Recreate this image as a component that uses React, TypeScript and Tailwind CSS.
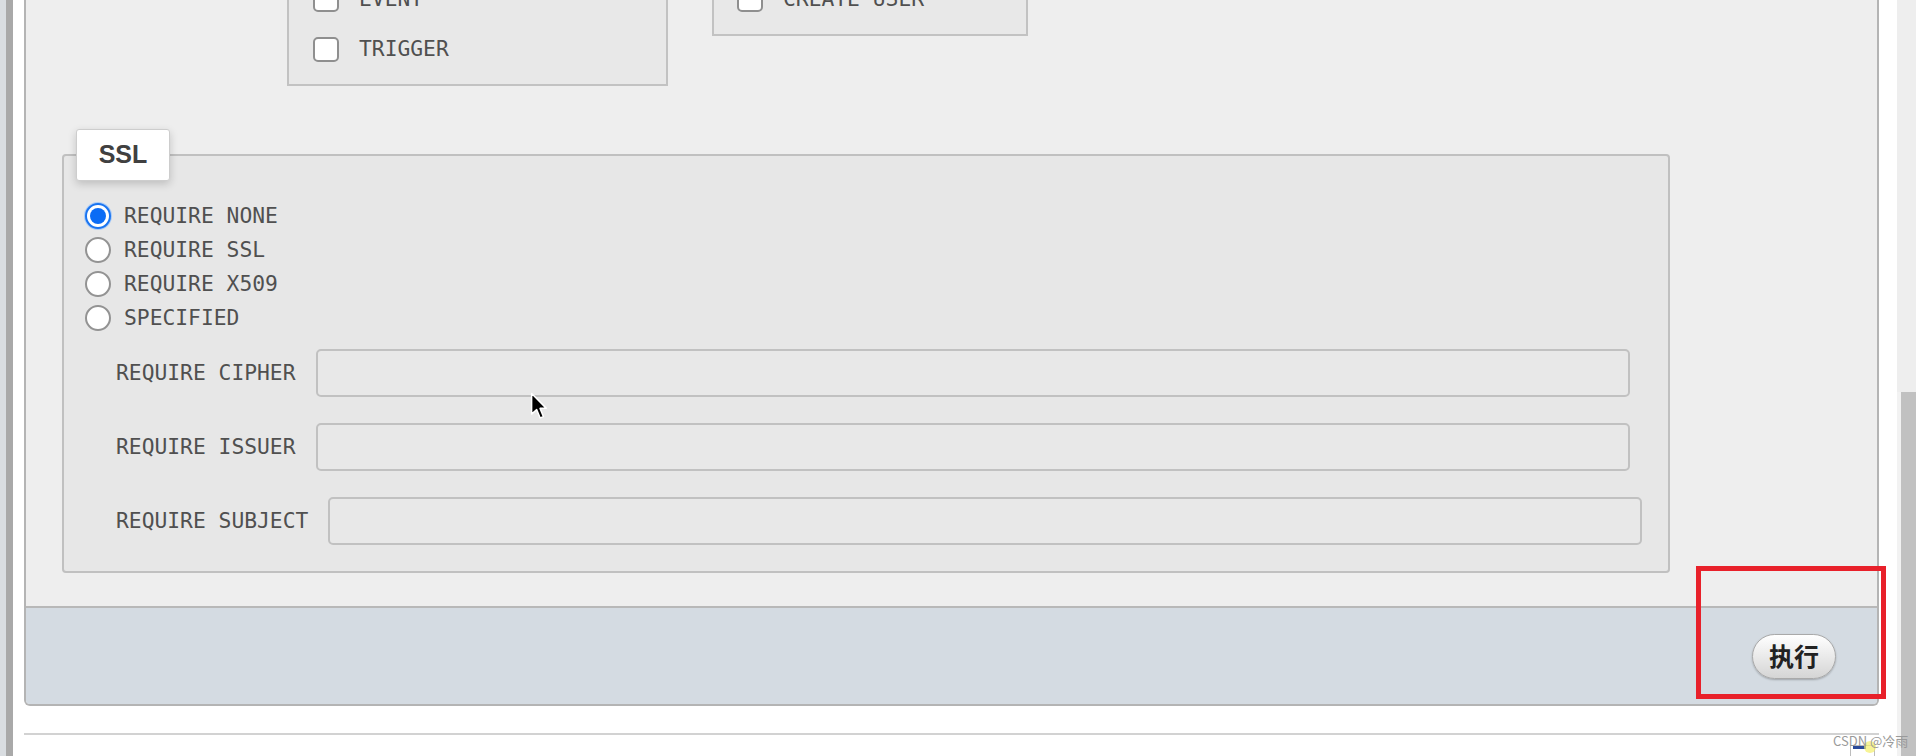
import React from 'react';

const mono = "font-['DejaVu_Sans_Mono',monospace]";

const CheckRow: React.FC<{ label: string }> = ({ label }) => (
  <label className="flex h-[50px] items-center gap-[20px]">
    <span className="h-[25px] w-[26px] shrink-0 rounded-[5px] border-2 border-[#8f8f8f] bg-white" />
    <span className="text-[21.3px] leading-none text-[#505050]">{label}</span>
  </label>
);

const RadioRow: React.FC<{ label: string; checked?: boolean }> = ({ label, checked }) => (
  <label className="flex h-[34px] items-center gap-[13px]">
    {checked ? (
      <span className="flex h-[26px] w-[26px] shrink-0 items-center justify-center rounded-full border-2 border-[#1a74f0] bg-white shadow-[0_0_0_1px_#a9cbf7]">
        <span className="h-[16px] w-[16px] rounded-full bg-[#0b6cf5]" />
      </span>
    ) : (
      <span className="h-[26px] w-[26px] shrink-0 rounded-full border-2 border-[#939393] bg-white" />
    )}
    <span className="text-[21.3px] leading-none text-[#505050]">{label}</span>
  </label>
);

const FieldRow: React.FC<{ label: string }> = ({ label }) => (
  <div className="flex items-center gap-[20px]">
    <span className="text-[21.3px] leading-none text-[#505050]">{label}</span>
    <input
      readOnly
      className="h-[48px] w-[1314px] rounded-[5px] border-2 border-[#c1c1c1] bg-[#e8e8e8] outline-none"
    />
  </div>
);

export default function App() {
  return (
    <div className={`relative flex h-[756px] w-[1916px] overflow-hidden bg-white ${mono}`}>
      {/* window edge on the left */}
      <div className="w-[6px] bg-[#d9dde1]" />
      <div className="w-[7px] bg-[#a9a9a9]" />

      <div className="ml-[11px] flex w-[1855px] flex-col">
        {/* dialog */}
        <div className="flex flex-col overflow-hidden rounded-b-[6px] border-x-2 border-b-2 border-[#b4b4b4] bg-[#eeeeee]">
          <div className="flex flex-col pb-[33px]">
            {/* privilege boxes, cut at the top */}
            <div className="-mt-[38px] flex items-start gap-[44px] pl-[261px]">
              <div className="w-[381px] border-2 border-[#c2c2c2] bg-[#e8e8e8] pl-[24px] pt-[10px] pb-[10px]">
                <CheckRow label="EVENT" />
                <CheckRow label="TRIGGER" />
              </div>
              <div className="w-[316px] border-2 border-[#c2c2c2] bg-[#e8e8e8] pl-[23px] pt-[10px] pb-[10px]">
                <CheckRow label="CREATE USER" />
              </div>
            </div>

            {/* SSL */}
            <fieldset className="ml-[36px] mt-[43px] w-[1608px] rounded-[4px] border-2 border-[#c0c0c0] bg-[#e7e7e7] pl-[12px]">
              <legend className="flex h-[52px] w-[94px] items-center justify-center rounded-[3px] border border-[#cdcdcd] bg-white font-['Liberation_Sans',sans-serif] text-[25px] font-bold text-[#404040] shadow-[0_3px_9px_rgba(0,0,0,0.18)]">
                SSL
              </legend>
              <div className="flex flex-col pl-[9px] pt-[18px]">
                <RadioRow label="REQUIRE NONE" checked />
                <RadioRow label="REQUIRE SSL" />
                <RadioRow label="REQUIRE X509" />
                <RadioRow label="SPECIFIED" />
              </div>
              <div className="mt-[14px] flex flex-col gap-[26px] pb-[26px] pl-[40px]">
                <FieldRow label="REQUIRE CIPHER" />
                <FieldRow label="REQUIRE ISSUER" />
                <FieldRow label="REQUIRE SUBJECT" />
              </div>
            </fieldset>
          </div>

          {/* footer */}
          <div className="flex h-[98px] items-center justify-end border-t-2 border-[#b8b8b8] bg-[#d4dbe2] pr-[41px]">
            <button className="flex h-[45px] w-[84px] items-center justify-center rounded-full border border-[#a9a9a9] bg-linear-to-b from-white to-[#d5d5d5] font-['Noto_Sans_CJK_SC',sans-serif] text-[25px] font-bold text-[#222] shadow-[0_1px_2px_rgba(0,0,0,0.25)]">
              执行
            </button>
          </div>
        </div>

        <div className="mt-[27px] h-[2px] bg-[#d2d2d2]" />
      </div>

      {/* scrollbar */}
      <div className="ml-[18px] flex w-[19px] flex-col">
        <div className="h-[392px] bg-[#eeeeee]" />
        <div className="flex flex-1 bg-[#f2f2f2] pl-[4px]">
          <div className="flex-1 bg-[#c1c1c1]" />
        </div>
      </div>

      {/* red annotation box */}
      <div className="absolute left-[1696px] top-[566px] h-[133px] w-[190px] border-[5px] border-[#e8202a]" />

      {/* watermark + tray icon */}
      <div className="absolute left-[1850px] top-[745px] h-[14px] w-[25px] border border-[#bdbdbd] bg-white">
        <div className="ml-[2px] h-[3px] w-[13px] bg-[#2a4a9a]" />
      </div>
      <div className="absolute left-[1864px] top-[741px] h-[12px] w-[12px] rounded-full bg-[#f4ef6a] opacity-70" />
      <div className="absolute left-[1833px] top-[733px] font-['Noto_Sans_CJK_SC',sans-serif] text-[13px] leading-[16px] text-[#9a9a9a]">
        CSDN @冷雨
      </div>

      {/* mouse pointer */}
      <svg
        className="absolute left-[530px] top-[392px]"
        width="18"
        height="28"
        viewBox="0 0 12 19"
      >
        <path
          d="M1 1 L1 15 L4.4 11.9 L6.8 17.6 L9 16.7 L6.7 11.1 L11 11.1 Z"
          fill="#000"
          stroke="#fff"
          strokeWidth="1"
          strokeLinejoin="round"
        />
      </svg>
    </div>
  );
}
